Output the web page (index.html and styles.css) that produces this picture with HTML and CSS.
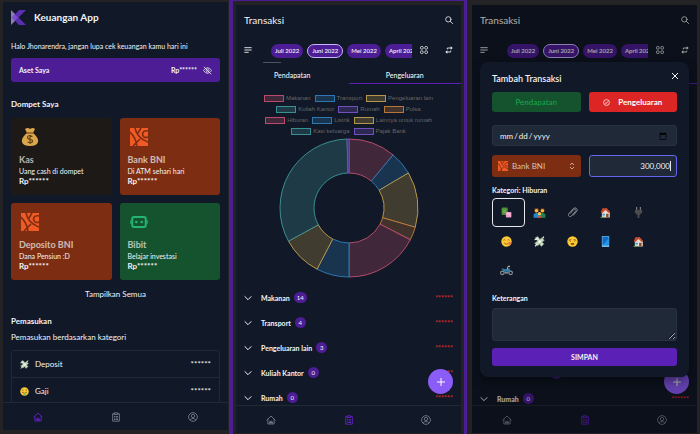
FILE: index.html
```html
<!DOCTYPE html>
<html lang="id">
<head>
<meta charset="utf-8">
<meta name="viewport" content="width=device-width, initial-scale=1">
<title>Keuangan App</title>
<link rel="stylesheet" href="styles.css">
</head>
<body>
<svg class="sprite" aria-hidden="true">
  <defs>
    <symbol id="home" viewBox="0 0 24 24"><path d="M2 12 12 2.500 22 12M4.500 10v11.500h15V10M9.500 21v-6h5v6M8 18h8" fill="none" stroke="currentColor" stroke-width="2.400" stroke-linejoin="round" stroke-linecap="round"/></symbol>
    <symbol id="clipboard" viewBox="0 0 24 24"><path d="M8 4H4v18h16V4h-4M8 2h8v4H8zM8 11h1M12 11h4M8 14.500h1M12 14.500h4M8 18h1M12 18h4" fill="none" stroke="currentColor" stroke-width="2.400" stroke-linejoin="round" stroke-linecap="round"/></symbol>
    <symbol id="user" viewBox="0 0 24 24"><g fill="none" stroke="currentColor" stroke-width="2.400"><circle cx="12" cy="12" r="10.500"/><circle cx="12" cy="9.500" r="4"/><path d="M5 19.500c2-5 12-5 14 0"/></g></symbol>
    <symbol id="search" viewBox="0 0 24 24"><g fill="none" stroke="currentColor" stroke-width="2.400" stroke-linecap="round"><circle cx="10" cy="10" r="8"/><path d="m16 16 7 7"/></g></symbol>
    <symbol id="menu" viewBox="0 0 24 24"><path d="M1 5h22M1 12h22M1 19h13" fill="none" stroke="currentColor" stroke-width="2.600"/></symbol>
    <symbol id="apps" viewBox="0 0 24 24"><g fill="none" stroke="currentColor" stroke-width="2.400"><rect x="1.500" y="1.500" width="8" height="8" rx="3"/><rect x="14.500" y="1.500" width="8" height="8" rx="3"/><rect x="1.500" y="14.500" width="8" height="8" rx="3"/><rect x="14.500" y="14.500" width="8" height="8" rx="3"/></g></symbol>
    <symbol id="swap" viewBox="0 0 24 24"><path d="M7 10V6h11M17 14v4H6" fill="none" stroke="currentColor" stroke-width="2.600"/><path d="m17 1 6 5-6 5zM7 13l-6 5 6 5z" fill="currentColor"/></symbol>
    <symbol id="chevron" viewBox="0 0 24 24"><path d="m2 7 10 10L22 7" fill="none" stroke="currentColor" stroke-width="3"/></symbol>
    <symbol id="bni" viewBox="0 0 18 18"><path d="M0 0h18v18H0z" fill="#f15a24"/><path d="M5 0q2 10 13 14M0 4q6 6 7 14M18 3c-5-1-7 3-4 6q2 1 4 0M11 0 8 5M10 11l-7 7" fill="none" stroke="#7c2d12" stroke-width="1.600"/></symbol>
    <symbol id="bot" viewBox="0 0 20 14"><rect x="2.500" y="1.500" width="15" height="11" rx="2" fill="none" stroke="#22b573" stroke-width="2.200"/><path d="M1 5v4M19 5v4M5.500 7h3M11.500 7h3M7 5.500v3M13 5.500v3" stroke="#22b573" stroke-width="1.500"/></symbol>
    <symbol id="cash" viewBox="0 0 18 18"><g stroke="#7d9a7c" stroke-width="1"><path d="M2 3 6 1l10 12-4 4z" fill="#dcead5"/><path d="m1 12 12-9 4 4-11 9z" fill="#c4d8bd"/></g><circle cx="9" cy="9" r="2.500" fill="#f4f7ee"/><path d="m1 6 4-1M14 4l2-3M2 17l3-4" stroke="#e8f1e4" stroke-width="2"/></symbol>
    <symbol id="face" viewBox="0 0 18 18"><circle cx="9" cy="9" r="8.500" fill="#fbc934"/><path d="M5.500 4.500v4M12.500 4.500v4" stroke="#88630d" stroke-width="1.400"/><path d="M4 10.500q5 4 10 0" fill="none" stroke="#88500f" stroke-width="1.400"/><path d="M7 12h4v5H7z" fill="#74b85a"/></symbol>
    <symbol id="smile" viewBox="0 0 18 18"><circle cx="9" cy="9" r="8.500" fill="#fbc934"/><path d="m4 7 2-1 1 1M11 7l1-1 2 1M5 11c2 3 6 3 8 0" fill="none" stroke="#70450d" stroke-width="1.200"/><circle cx="14" cy="12" r="2.500" fill="#ec7250"/></symbol>
    <symbol id="sad" viewBox="0 0 18 18"><circle cx="9" cy="9" r="8.500" fill="#fbc934"/><path d="m3 7 4-1M11 6l4 1M5 9h1M12 9h1" stroke="#70450d" stroke-width="1.400"/><ellipse cx="9" cy="13" rx="3" ry="1.500" fill="#70450d"/></symbol>
    <symbol id="games" viewBox="0 0 18 18"><rect x="1" y="1" width="10" height="12" rx="1.500" fill="#4f8f3a"/><path d="M3 4h5v6H3z" fill="#68a94c"/><rect x="8" y="8" width="9" height="9" rx="1.500" fill="#efa0c8"/><path d="m10 12 2-2 3 4" fill="none" stroke="#ffdcec" stroke-width="1.500"/></symbol>
    <symbol id="family" viewBox="0 0 22 18"><circle cx="6" cy="5" r="4" fill="#6c3a20"/><circle cx="16" cy="5" r="4" fill="#4e2d1c"/><circle cx="6" cy="6" r="3" fill="#f7b944"/><circle cx="16" cy="6" r="3" fill="#f7b944"/><path d="M1 18v-6q5-4 10 0v6z" fill="#2387d1"/><path d="M11 18v-6q5-4 10 0v6z" fill="#238554"/><circle cx="11" cy="11" r="3" fill="#f9c450"/><path d="M7 18q4-7 8 0z" fill="#e84b31"/></symbol>
    <symbol id="clip" viewBox="0 0 18 18"><path d="m5 11 6-7c3-2 5 1 3 3l-7 8c-3 2-6-1-4-4l7-8c4-4 9 1 6 4l-6 7" fill="none" stroke="#9a9ea5" stroke-width="1.400"/></symbol>
    <symbol id="house" viewBox="0 0 18 18"><path d="M3 8 10 2l6 6v9H3z" fill="#e7e1d8"/><path d="M1 9 4 2h7l6 7-3 1-5-5-5 5z" fill="#ce4a2d"/><path d="M10 11h4v6h-4z" fill="#864b2b"/><path d="M4 11h4v3H4z" fill="#4b99c5"/><path d="M1 17h6" stroke="#55964e" stroke-width="2"/></symbol>
    <symbol id="plug" viewBox="0 0 18 18"><path d="M6 0v6M12 0v6" stroke="#858585" stroke-width="1.800"/><path d="M3 5h12v4l-4 4H7L3 9z" fill="#4b4b4b"/><path d="M9 12v6" stroke="#4b4b4b" stroke-width="3"/></symbol>
    <symbol id="phone" viewBox="0 0 18 18"><rect x="3" width="12" height="18" rx="1" fill="#75bae8"/><path d="M4 1h10v14H4z" fill="#116bc4"/><path d="m4 15 10-11v11z" fill="#2593e7"/></symbol>
    <symbol id="motor" viewBox="0 0 22 18"><g fill="none" stroke="#8b9098" stroke-width="2"><circle cx="4" cy="13" r="3"/><circle cx="18" cy="13" r="3"/></g><path d="m2 5 8 2 6-2 2 6H7z" fill="#3580a8"/><path d="M12 7 14 2h3M8 13h6" stroke="#a1a9b3" stroke-width="1.800" fill="none"/></symbol>
  </defs>
</svg>

<main class="board">
  <section class="pane pane-home">
    <div class="screen">
      <div class="content">
        <header class="brand">
          <svg class="logo" viewBox="0 0 15 15"><path d="M0 0 5 5v5l-5 5z" fill="#8b7bb8"/><path d="M8 0h7L7.500 7.500 15 15H8L1 7.500z" fill="#5b2fb4"/><path d="m1 7.500 3-3 3 3-3 3z" fill="#7c4fd0"/></svg>
          <h1 class="brand-name">Keuangan App</h1>
        </header>
        <p class="greeting">Halo Jhonarendra, jangan lupa cek keuangan kamu hari ini</p>
        <div class="asset">
          <span>Aset Saya</span>
          <span class="asset-value">Rp******
            <button class="icon-button" type="button" aria-label="Tampilkan saldo"><svg class="icon-eye" viewBox="0 0 24 24"><g fill="none" stroke="currentColor" stroke-width="2"><path d="M1 12q11-15 22 0-11 15-22 0z"/><circle cx="12" cy="12" r="4"/><path d="m2 2 20 20"/></g></svg></button>
          </span>
        </div>
        <h2 class="heading">Dompet Saya</h2>
        <div class="wallets">
          <article class="wallet wallet-cash">
            <svg class="wallet-icon" viewBox="0 0 18 18"><path d="M6 5 4 1q3-2 5 0 3-2 5 0l-2 4q6 5 5 9-1 4-8 4t-8-4q-1-4 5-9z" fill="#d9a84e"/><path d="M6 5h6" stroke="#8f5d24" stroke-width="1.500"/><path d="M11.500 8.500q-5-2-5 1 0 1.500 2.500 2 3 .5 2.500 2-.5 2-5 .5M9 7v9" fill="none" stroke="#66430f" stroke-width="1.200"/></svg>
            <h3 class="wallet-name">Kas</h3><p>Uang cash di dompet</p><p class="wallet-sum">Rp******</p>
          </article>
          <article class="wallet wallet-bank">
            <svg class="wallet-icon"><use href="#bni"/></svg>
            <h3 class="wallet-name">Bank BNI</h3><p>Di ATM sehari hari</p><p class="wallet-sum">Rp******</p>
          </article>
          <article class="wallet wallet-bank">
            <svg class="wallet-icon"><use href="#bni"/></svg>
            <h3 class="wallet-name">Deposito BNI</h3><p>Dana Pensiun :D</p><p class="wallet-sum">Rp******</p>
          </article>
          <article class="wallet wallet-invest">
            <svg class="wallet-icon"><use href="#bot"/></svg>
            <h3 class="wallet-name">Bibit</h3><p>Belajar investasi</p><p class="wallet-sum">Rp******</p>
          </article>
        </div>
        <button class="show-all" type="button">Tampilkan Semua</button>
        <h2 class="heading">Pemasukan</h2>
        <p class="subheading">Pemasukan berdasarkan kategori</p>
        <ul class="income">
          <li><svg class="emoji"><use href="#cash"/></svg><span>Deposit</span><span class="income-sum">******</span></li>
          <li><svg class="emoji"><use href="#face"/></svg><span>Gaji</span><span class="income-sum">******</span></li>
        </ul>
      </div>
      <nav class="tabbar">
        <a class="active" href="#" aria-label="Beranda"><svg><use href="#home"/></svg></a>
        <a href="#" aria-label="Transaksi"><svg><use href="#clipboard"/></svg></a>
        <a href="#" aria-label="Profil"><svg><use href="#user"/></svg></a>
      </nav>
    </div>
  </section>

  <section class="pane pane-list">
    <div class="screen">
      <div class="content">
        <header class="topbar"><h2 class="page-title">Transaksi</h2><button class="icon-button" type="button" aria-label="Cari"><svg class="icon"><use href="#search"/></svg></button></header>
        <div class="toolbar">
          <button class="icon-button" type="button" aria-label="Urutkan"><svg class="icon"><use href="#menu"/></svg></button>
          <div class="months">
            <div class="month-row"><button class="pill" type="button">Juli 2022</button><button class="pill selected" type="button">Juni 2022</button><button class="pill" type="button">Mei 2022</button><button class="pill" type="button">April 2022</button></div>
            <div class="scroll-thumb"></div>
          </div>
          <button class="icon-button" type="button" aria-label="Kategori"><svg class="icon"><use href="#apps"/></svg></button>
          <button class="icon-button" type="button" aria-label="Transfer"><svg class="icon"><use href="#swap"/></svg></button>
        </div>
        <div class="tabs"><button class="tab" type="button">Pendapatan</button><button class="tab current" type="button">Pengeluaran</button></div>
        <div class="legend">
          <div class="legend-row"><span class="key red">Makanan</span><span class="key blue">Transport</span><span class="key yellow">Pengeluaran lain</span></div>
          <div class="legend-row"><span class="key teal">Kuliah Kantor</span><span class="key purple">Rumah</span><span class="key orange">Pulsa</span></div>
          <div class="legend-row"><span class="key red">Hiburan</span><span class="key blue">Listrik</span><span class="key yellow">Lainnya untuk rumah</span></div>
          <div class="legend-row"><span class="key teal">Kasi keluarga</span><span class="key purple">Pajak Bank</span></div>
        </div>
        <svg class="donut" id="donut" viewBox="0 0 140 140" role="img" aria-label="Pengeluaran per kategori"></svg>
        <ul class="groups">
          <li><svg class="icon"><use href="#chevron"/></svg><b>Makanan</b><span class="badge">14</span><span class="sum">******</span></li>
          <li><svg class="icon"><use href="#chevron"/></svg><b>Transport</b><span class="badge">4</span><span class="sum">******</span></li>
          <li><svg class="icon"><use href="#chevron"/></svg><b>Pengeluaran lain</b><span class="badge">3</span><span class="sum">******</span></li>
          <li><svg class="icon"><use href="#chevron"/></svg><b>Kuliah Kantor</b><span class="badge">0</span><span class="sum">******</span></li>
          <li><svg class="icon"><use href="#chevron"/></svg><b>Rumah</b><span class="badge">0</span><span class="sum">******</span></li>
        </ul>
      </div>
      <button class="fab" type="button" aria-label="Tambah transaksi"><svg viewBox="0 0 8 8"><path d="M4 0v8M0 4h8" stroke="currentColor"/></svg></button>
      <nav class="tabbar">
        <a href="#" aria-label="Beranda"><svg><use href="#home"/></svg></a>
        <a class="active" href="#" aria-label="Transaksi"><svg><use href="#clipboard"/></svg></a>
        <a href="#" aria-label="Profil"><svg><use href="#user"/></svg></a>
      </nav>
    </div>
  </section>

  <section class="pane pane-form">
    <div class="screen">
      <div class="content">
        <header class="topbar"><h2 class="page-title">Transaksi</h2><button class="icon-button" type="button" aria-label="Cari"><svg class="icon"><use href="#search"/></svg></button></header>
        <div class="toolbar">
          <button class="icon-button" type="button" aria-label="Urutkan"><svg class="icon"><use href="#menu"/></svg></button>
          <div class="months">
            <div class="month-row"><button class="pill" type="button">Juli 2022</button><button class="pill selected" type="button">Juni 2022</button><button class="pill" type="button">Mei 2022</button><button class="pill" type="button">April 2022</button></div>
            <div class="scroll-thumb"></div>
          </div>
          <button class="icon-button" type="button" aria-label="Kategori"><svg class="icon"><use href="#apps"/></svg></button>
          <button class="icon-button" type="button" aria-label="Transfer"><svg class="icon"><use href="#swap"/></svg></button>
        </div>
        <div class="tabs"><span class="tab"></span><span class="tab current"></span></div>
        <ul class="groups groups-end">
          <li><span class="badge badge-peek"></span></li>
          <li><svg class="icon"><use href="#chevron"/></svg><b>Rumah</b><span class="badge">0</span><span class="sum">******</span></li>
        </ul>
      </div>
      <button class="fab" type="button" aria-label="Tambah transaksi"><svg viewBox="0 0 8 8"><path d="M4 0v8M0 4h8" stroke="currentColor"/></svg></button>
      <nav class="tabbar">
        <a href="#" aria-label="Beranda"><svg><use href="#home"/></svg></a>
        <a class="active" href="#" aria-label="Transaksi"><svg><use href="#clipboard"/></svg></a>
        <a href="#" aria-label="Profil"><svg><use href="#user"/></svg></a>
      </nav>
      <div class="scrim"></div>
      <form class="modal">
        <header class="modal-head"><h2 class="modal-title">Tambah Transaksi</h2><button class="icon-button" type="button" aria-label="Tutup"><svg class="icon-close" viewBox="0 0 8 8"><path d="m1 1 6 6M7 1 1 7" stroke="currentColor"/></svg></button></header>
        <div class="pair">
          <button class="kind kind-in" type="button">Pendapatan</button>
          <button class="kind kind-out" type="button"><svg viewBox="0 0 24 24"><g fill="none" stroke="currentColor" stroke-width="2.500"><circle cx="12" cy="12" r="10"/><path d="m7 12 4 4 6-8"/></g></svg>Pengeluaran</button>
        </div>
        <input class="field date" type="date" aria-label="Tanggal">
        <div class="pair pair-fields">
          <div class="select-wrap">
            <svg class="select-logo"><use href="#bni"/></svg>
            <select class="account" aria-label="Dompet"><option>Bank BNI</option></select>
            <svg class="select-arrows" viewBox="0 0 6 8"><path d="m1 3 2-2 2 2M1 5l2 2 2-2" fill="none" stroke="currentColor"/></svg>
          </div>
          <div class="amount-wrap"><input class="field amount" type="text" value="300,000" aria-label="Jumlah"></div>
        </div>
        <p class="label">Kategori: Hiburan</p>
        <div class="cats">
          <button class="cat chosen" type="button" aria-label="Hiburan"><svg><use href="#games"/></svg></button>
          <button class="cat" type="button" aria-label="Kasi keluarga"><svg class="wide"><use href="#family"/></svg></button>
          <button class="cat" type="button" aria-label="Kuliah Kantor"><svg><use href="#clip"/></svg></button>
          <button class="cat" type="button" aria-label="Rumah"><svg><use href="#house"/></svg></button>
          <button class="cat" type="button" aria-label="Listrik"><svg><use href="#plug"/></svg></button>
          <button class="cat" type="button" aria-label="Makanan"><svg><use href="#smile"/></svg></button>
          <button class="cat" type="button" aria-label="Pajak Bank"><svg><use href="#cash"/></svg></button>
          <button class="cat" type="button" aria-label="Pengeluaran lain"><svg><use href="#sad"/></svg></button>
          <button class="cat" type="button" aria-label="Pulsa"><svg><use href="#phone"/></svg></button>
          <button class="cat" type="button" aria-label="Lainnya untuk rumah"><svg><use href="#house"/></svg></button>
          <button class="cat" type="button" aria-label="Transport"><svg class="wide"><use href="#motor"/></svg></button>
        </div>
        <label class="label" for="note">Keterangan</label>
        <textarea class="field note" id="note"></textarea>
        <button class="save" type="submit">SIMPAN</button>
      </form>
    </div>
  </section>
</main>
<script src="chart.js"></script>
</body>
</html>
```
FILE: styles.css
```css
*, *::before, *::after { box-sizing: border-box; }
* { margin: 0; padding: 0; }
body { background: #232326; color: #f3f4f6; font: 7px/12px Lato, "Noto Sans", sans-serif; }
button, input, select, textarea { font: inherit; color: inherit; border: 0; background: none; }
ul { list-style: none; }
svg { display: block; flex: none; }
.sprite { position: absolute; width: 0; height: 0; }

.board { display: grid; grid-template-columns: 229fr 238fr 233fr; height: 100vh; }
.pane { display: grid; min-width: 0; min-height: 0; }
.pane-home { padding: 2px 1px 4px 3px; }
.pane-list { padding: 4px 3px 1px; border: solid #4c1d95; border-width: 1px 3px 0 4px; }
.pane-form { padding: 5px 3px 1px 5px; }
.screen { position: relative; display: flex; flex-direction: column; min-width: 0; min-height: 0; overflow: hidden; background: #111827; }
.content { flex: 1; min-height: 0; overflow: hidden; padding: 8px 8px 0; display: flex; flex-direction: column; }
.content > * { flex: none; }

.icon-button { display: block; flex: none; }
.icon { width: 8px; height: 8px; }

.brand { display: flex; align-items: center; gap: 8px; }
.logo { width: 15px; height: 15px; }
.brand-name { font-size: 10px; line-height: 15px; font-weight: 700; }
.greeting { margin-top: 15px; }
.asset { margin-top: 6px; padding: 6px 8px; display: flex; justify-content: space-between; border-radius: 3px; background: #4c1d95; font-weight: 700; }
.asset-value { display: flex; align-items: center; gap: 6px; }
.icon-eye { width: 9px; height: 9px; }
.heading { margin-top: 16px; font-size: 8px; font-weight: 700; }
.wallets { margin-top: 8px; display: grid; grid-template-columns: 1fr 1fr; gap: 8px; }
.wallet { padding: 10px 8px 9px; border-radius: 3px; line-height: 10px; }
.wallet-cash { background: #1c1917; }
.wallet-bank { background: #7c2d12; }
.wallet-invest { background: #14532d; }
.wallet-icon { width: 18px; height: 18px; margin: 0 2px 8px; }
.wallet-name { font-size: 9px; line-height: 12px; font-weight: 700; opacity: 0.7; }
.wallet-sum { font-weight: 700; font-size: 8px; }
.show-all { margin-top: 8px; font-size: 8px; }
.show-all + .heading { margin-top: 15px; }
.subheading { margin-top: 4px; font-size: 8px; }
.income { margin-top: 7px; border: 1px solid #1f2937; border-radius: 3px; font-size: 8px; }
.income li { display: flex; align-items: center; gap: 6px; padding: 7px 8px; }
.income li + li { border-top: 1px solid #1f2937; }
.income-sum { margin-left: auto; }
.emoji { width: 9px; height: 9px; }

.tabbar { flex: none; display: flex; justify-content: space-between; align-items: center; height: 28px; padding: 0 30px; border-top: 1px solid #1f2937; color: #6b7280; }
.tabbar a { color: inherit; }
.tabbar svg { width: 10px; height: 10px; }
.tabbar .active { color: #5b21b6; }

.topbar { display: flex; justify-content: space-between; align-items: center; }
.page-title { font-size: 10px; line-height: 14px; font-weight: 400; }
.toolbar { margin-top: 17px; display: flex; align-items: flex-start; }
.toolbar > .icon-button { margin-top: 2px; }
.months { flex: 1; min-width: 0; overflow: hidden; margin: 0 8px 0 11px; }
.toolbar .months + .icon-button { margin-right: 17px; }
.month-row { display: flex; gap: 4px; padding-left: 8px; }
.pill { flex: none; height: 14px; padding: 0 4px; border-radius: 7px; background: #4c1d95; font-size: 6px; line-height: 12px; font-weight: 600; }
.pill.selected { border: 1px solid #c4b5fd; }
.scroll-thumb { width: 18px; height: 1px; margin-top: 4px; background: #4b5563; }
.tabs { display: grid; grid-template-columns: 1fr 1fr; margin: 6px -8px 0; }
.tab { height: 15px; padding-bottom: 2px; border-bottom: 1px solid transparent; font-weight: 500; }
.tab.current { border-bottom-color: #5b21b6; }

.legend { margin-top: 9px; font: 6px/11px "Liberation Sans", sans-serif; color: #666; }
.legend-row { display: flex; justify-content: center; gap: 4px; }
.key { display: flex; align-items: center; gap: 2px; }
.key::before { content: ""; width: 20px; height: 7px; border: 1px solid var(--line); background: var(--fill); }
.red { --line: #b74b6b; --fill: #41273a; }
.blue { --line: #2d78b0; --fill: #18344e; }
.yellow { --line: #b6964a; --fill: #413c30; }
.teal { --line: #3b8f92; --fill: #1d3a46; }
.purple { --line: #7150bd; --fill: #2c2852; }
.orange { --line: #b6763a; --fill: #41332c; }
.donut { width: 140px; height: 140px; margin: 1px auto 0; }
.slice { fill: var(--fill); stroke: var(--line); stroke-width: 1; stroke-linejoin: round; }

.groups { margin-top: 7px; }
.groups li { display: flex; align-items: center; height: 25px; }
.groups b { margin-left: 9px; font-weight: 700; }
.badge { min-width: 11px; height: 11px; margin-left: 4px; padding: 0 3px; border-radius: 6px; background: #4c1d95; font-size: 6px; line-height: 11px; text-align: center; }
.sum { margin-left: auto; color: #dc2626; font-weight: 700; }
.fab { position: absolute; right: 8px; bottom: 39px; width: 25px; height: 25px; display: grid; place-items: center; border-radius: 50%; background: #8b5cf6; color: #fff; }
.fab svg { width: 8px; height: 8px; }
.groups-end { margin-top: auto; margin-bottom: -6px; }
.badge-peek { margin-left: 71px; }

.scrim { position: absolute; inset: 0; background: rgba(0, 0, 0, 0.3); }
.modal { position: absolute; left: 8px; right: 8px; top: 57px; padding: 10px 12px 11px; display: flex; flex-direction: column; border-radius: 8px; background: #111827; box-shadow: 0 4px 10px rgba(0, 0, 0, 0.4); }
.modal-head { display: flex; justify-content: space-between; margin-right: -2px; }
.modal-title { font-size: 9px; line-height: 14px; font-weight: 600; }
.icon-close { width: 8px; height: 8px; margin-bottom: 6px; }
.pair { display: grid; grid-template-columns: 1fr 1fr; gap: 8px; margin-top: 6px; }
.kind { display: flex; align-items: center; justify-content: center; gap: 8px; height: 20px; border-radius: 3px; font-size: 8px; font-weight: 500; }
.kind svg { width: 7px; height: 7px; }
.kind-in { background: #14532d; color: #16a34a; }
.kind-out { background: #dc2626; color: #fff; font-weight: 700; }
.field { width: 100%; border: 1px solid #283341; border-radius: 3px; background: #1f2937; }
.date { margin-top: 13px; height: 21px; padding: 0 7px 0 6px; font-size: 8px; }
.pair-fields { margin-top: 9px; }
.select-wrap, .amount-wrap { position: relative; display: grid; height: 22px; }
.account { appearance: none; width: 100%; padding: 0 20px; border-radius: 3px; background: #7c2d12; color: #d6c3bb; font-size: 8px; }
.select-logo { position: absolute; left: 6px; top: 6px; width: 10px; height: 10px; }
.select-arrows { position: absolute; right: 6px; top: 7px; width: 6px; height: 8px; color: #c9a598; }
.amount { border-color: #6366f1; padding: 0 6px; text-align: right; font-size: 8px; }
.amount-wrap::after { content: ""; position: absolute; right: 6px; top: 6px; width: 1px; height: 10px; background: #e5e7eb; }
.label { margin-top: 8px; line-height: 10px; font-weight: 700; }
.cats { display: flex; flex-wrap: wrap; margin-top: 3px; }
.cat { width: 33px; height: 29px; display: grid; place-items: center; padding-right: 4px; border: 1px solid transparent; border-radius: 4px; }
.cat.chosen { border-color: #e5e7eb; }
.cat svg { width: 11px; height: 11px; }
.cat svg.wide { width: 13px; }
.note { display: block; height: 33px; margin-top: 5px; }
.save { height: 18px; margin-top: 7px; border-radius: 3px; background: #5b21b6; font-weight: 700; }
```
FILE: chart.js
```js
const slices = [
  ["red", 0, 39.7],
  ["blue", 39.7, 59.5],
  ["yellow", 59.5, 106.2],
  ["orange", 106.2, 117.4],
  ["red", 117.4, 180],
  ["blue", 180, 207.6],
  ["yellow", 207.6, 241.3],
  ["teal", 241.3, 358.4],
  ["purple", 358.4, 360]
];
const point = (r, deg) => {
  const a = (deg * Math.PI) / 180;
  return `${(70 + r * Math.sin(a)).toFixed(2)} ${(70 - r * Math.cos(a)).toFixed(2)}`;
};
const donut = document.getElementById("donut");
for (const [color, from, to] of slices) {
  const path = document.createElementNS("http://www.w3.org/2000/svg", "path");
  const large = to - from > 180 ? 1 : 0;
  path.setAttribute("class", `slice ${color}`);
  path.setAttribute("d", `M${point(69, from)}A69 69 0 ${large} 1 ${point(69, to)}L${point(35, to)}A35 35 0 ${large} 0 ${point(35, from)}Z`);
  donut.append(path);
}
```
